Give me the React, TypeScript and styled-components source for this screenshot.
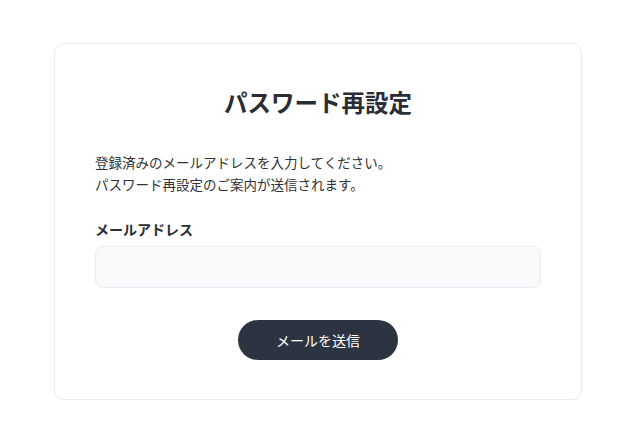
import React from "react";
import styled, { createGlobalStyle } from "styled-components";

const GlobalStyle = createGlobalStyle`
  * {
    box-sizing: border-box;
  }
  body {
    margin: 0;
    background: #ffffff;
    font-family: "Noto Sans CJK JP", "Noto Sans", sans-serif;
    color: #333333;
  }
`;

const Page = styled.div`
  display: flex;
  justify-content: center;
  padding: 43px 0 0 4px;
`;

const Card = styled.div`
  width: 528px;
  padding: 40px 40px 39px;
  background: #ffffff;
  border: 1px solid #ebebeb;
  border-radius: 10px;
  display: flex;
  flex-direction: column;
`;

const Title = styled.h1`
  margin: 0 0 31px;
  text-align: center;
  font-size: 23.5px;
  line-height: 36px;
  font-weight: 700;
  letter-spacing: 0;
  color: #2b2d36;
`;

const Description = styled.p`
  margin: 0 0 24px;
  font-size: 13.5px;
  line-height: 22px;
  color: #333333;
`;

const Field = styled.div`
  display: flex;
  flex-direction: column;
  gap: 7px;
`;

const Label = styled.label`
  font-size: 14px;
  line-height: 20px;
  font-weight: 700;
  color: #2b2d36;
`;

const Input = styled.input`
  height: 42px;
  padding: 0 14px;
  background: #f8f9fb;
  border: 1px solid #e9ebef;
  border-radius: 8px;
  font-family: inherit;
  font-size: 14px;
  outline: none;
`;

const Actions = styled.div`
  display: flex;
  justify-content: center;
  margin-top: 32px;
`;

const Button = styled.button`
  width: 160px;
  height: 40px;
  border: none;
  border-radius: 20px;
  background: #2d3441;
  color: #ffffff;
  font-family: inherit;
  font-size: 14px;
  cursor: pointer;
`;

const App = () => {
  return (
    <>
      <GlobalStyle />
      <Page>
        <Card>
          <Title>パスワード再設定</Title>
          <Description>
            登録済みのメールアドレスを入力してください。
            <br />
            パスワード再設定のご案内が送信されます。
          </Description>
          <Field>
            <Label htmlFor="email">メールアドレス</Label>
            <Input id="email" type="email" />
          </Field>
          <Actions>
            <Button type="button">メールを送信</Button>
          </Actions>
        </Card>
      </Page>
    </>
  );
};

export default App;
